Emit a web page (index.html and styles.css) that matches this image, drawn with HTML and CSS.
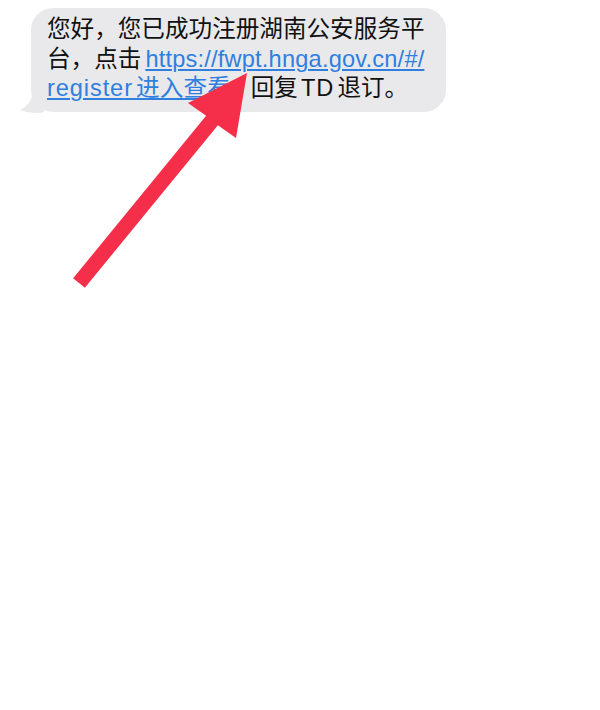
FILE: index.html
```html
<!DOCTYPE html>
<html lang="zh">
<head>
<meta charset="utf-8">
<link rel="stylesheet" href="styles.css">
</head>
<body>
<div class="page">
  <div class="msg">
    <div class="bubble">
      <p class="text">您好，您已成功注册湖南公安服务平<br>台，点击<a class="link url" href="#">https://fwpt.hnga.gov.cn/#/<br><span class="reg">registe<span class="sp">r</span></span>进入查看</a><span class="cm">，</span>回复<span class="td">TD</span>退订。</p>
    </div>
    <svg class="tail" width="24" height="20" viewBox="0 0 24 20"><path d="M24 0 L24 18 C18 20 8 19 0 16 C8 12 12 6 12 0 Z" fill="#e9e9eb"/></svg>
  </div>
  <svg class="arrow" width="600" height="710" viewBox="0 0 600 710"><polygon points="247,73 236,138 217.9,125.2 84.9,287.7 73.1,278.3 206.1,115.8 188,103" fill="#f52f49"/></svg>
</div>
</body>
</html>
```
FILE: styles.css
```css
html, body {
  margin: 0;
  padding: 0;
  background: #ffffff;
}
.page {
  position: relative;
  width: 600px;
  height: 710px;
  overflow: hidden;
  font-family: "Liberation Sans", "Noto Sans CJK SC", sans-serif;
}
.msg {
  position: relative;
  padding: 8px 0 0 31px;
}
.bubble {
  width: 415px;
  box-sizing: border-box;
  background: #e9e9eb;
  border-radius: 22px;
  padding: 7px 6px 8px 16px;
}
.text {
  margin: 0;
  font-size: 23.6px;
  line-height: 29.5px;
  color: #111111;
}
.link {
  color: #2f7fdf;
  letter-spacing: 0.2px;
  text-decoration: underline;
  text-decoration-thickness: 1.5px;
  text-underline-offset: 2px;
}
.url {
  margin-left: 4px;
}
.reg {
  letter-spacing: 0.9px;
}
.sp {
  letter-spacing: 4px;
}
.cm {
  letter-spacing: -4px;
}
.td {
  margin: 0 3px 0 3px;
  letter-spacing: 1px;
}
.tail {
  position: absolute;
  left: 20px;
  top: 94px;
}
.arrow {
  position: absolute;
  left: 0;
  top: 0;
}
```
